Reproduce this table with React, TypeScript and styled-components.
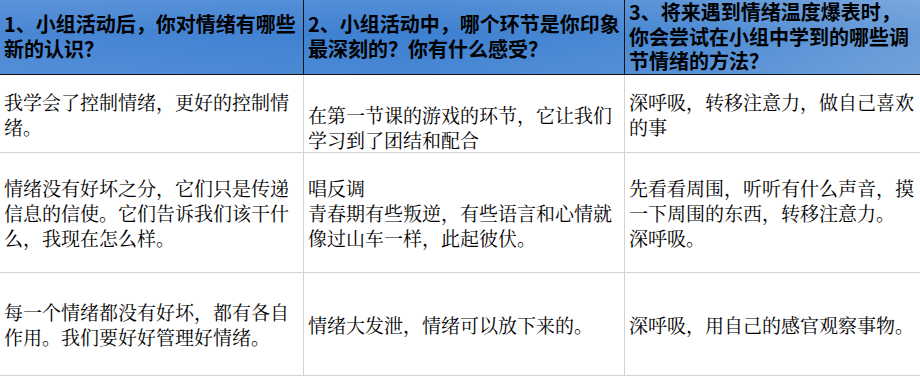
import styled, { createGlobalStyle } from "styled-components";

const Global = createGlobalStyle`
  html, body {
    margin: 0;
    padding: 0;
    background: #ffffff;
  }
`;

const Sheet = styled.table`
  width: 920px;
  table-layout: fixed;
  border-collapse: separate;
  border-spacing: 0;
  font-family: "Noto Serif CJK SC", "Noto Sans CJK SC", serif;
  color: #000;
`;

const Col = styled.col<{ $w: number }>`
  width: ${(p) => p.$w}px;
`;

const HeadRow = styled.tr`
  background:
    linear-gradient(
      180deg,
      rgba(255, 255, 255, 0.1) 0%,
      rgba(255, 255, 255, 0) 45%,
      rgba(255, 255, 255, 0.06) 100%
    ),
    linear-gradient(90deg, #4987d5 0%, #3d80d1 45%, #4d8bd4 75%, #6a9cd9 100%);
`;

const HeadCell = styled.th<{ $last?: boolean }>`
  box-sizing: border-box;
  height: 75px;
  padding: 0 4px;
  text-align: left;
  vertical-align: middle;
  font-family: "Noto Sans CJK SC", sans-serif;
  font-weight: 700;
  font-size: 20px;
  line-height: 24.6px;
  white-space: pre-line;
  border-bottom: 1px solid #111;
  border-right: ${(p) => (p.$last ? "none" : "1px solid #111")};
`;

const Cell = styled.td<{ $last?: boolean; $h: number; $valign?: string }>`
  box-sizing: border-box;
  height: ${(p) => p.$h}px;
  padding: 0 4px;
  vertical-align: ${(p) => p.$valign || "middle"};
  font-size: 19px;
  line-height: 25px;
  white-space: pre-line;
  border-bottom: 1px solid #d4d4d4;
  border-right: ${(p) => (p.$last ? "none" : "1px solid #d4d4d4")};
`;

const widths = [304, 321, 295];

const questions = [
  "1、小组活动后，你对情绪有哪些新的认识？",
  "2、小组活动中，哪个环节是你印象最深刻的？你有什么感受？",
  "3、将来遇到情绪温度爆表时，\n你会尝试在小组中学到的哪些调节情绪的方法？",
];

const rows = [
  {
    h: 78,
    cells: [
      { text: "我学会了控制情绪，更好的控制情绪。" },
      { text: "在第一节课的游戏的环节，它让我们学习到了团结和配合", valign: "bottom" },
      { text: "深呼吸，转移注意力，做自己喜欢的事" },
    ],
  },
  {
    h: 120,
    cells: [
      { text: "情绪没有好坏之分，它们只是传递信息的信使。它们告诉我们该干什么，我现在怎么样。" },
      { text: "唱反调\n青春期有些叛逆，有些语言和心情就像过山车一样，此起彼伏。" },
      { text: "先看看周围，听听有什么声音，摸一下周围的东西，转移注意力。\n深呼吸。" },
    ],
  },
  {
    h: 103,
    cells: [
      { text: "每一个情绪都没有好坏，都有各自作用。我们要好好管理好情绪。" },
      { text: "情绪大发泄，情绪可以放下来的。" },
      { text: "深呼吸，用自己的感官观察事物。" },
    ],
  },
];

export default function App() {
  return (
    <>
      <Global />
      <Sheet>
        <colgroup>
          {widths.map((w, i) => (
            <Col key={i} $w={w} />
          ))}
        </colgroup>
        <thead>
          <HeadRow>
            {questions.map((q, i) => (
              <HeadCell key={i} $last={i === 2}>
                {q}
              </HeadCell>
            ))}
          </HeadRow>
        </thead>
        <tbody>
          {rows.map((r, ri) => (
            <tr key={ri}>
              {r.cells.map((c, ci) => (
                <Cell key={ci} $h={r.h} $last={ci === 2} $valign={c.valign}>
                  {c.text}
                </Cell>
              ))}
            </tr>
          ))}
        </tbody>
      </Sheet>
    </>
  );
}
